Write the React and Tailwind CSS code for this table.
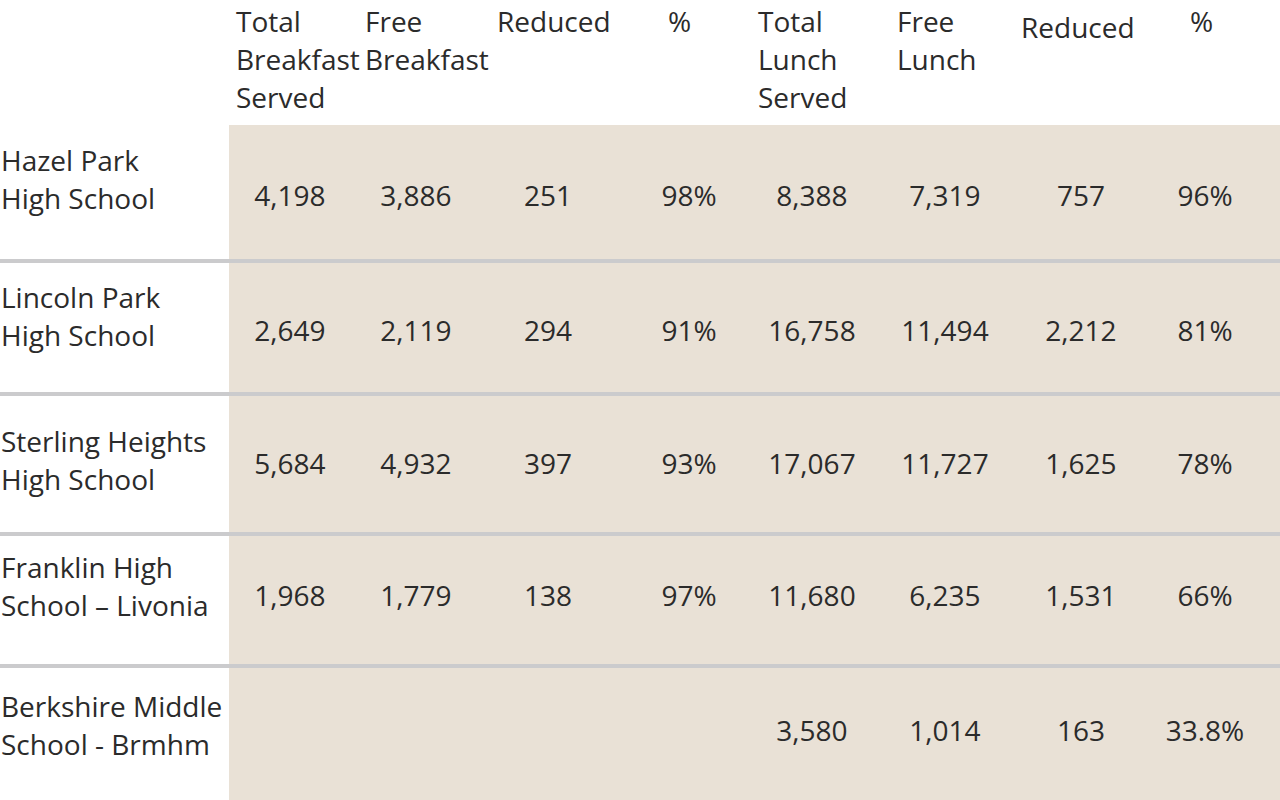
const headers = [
  ["Total", "Breakfast", "Served"],
  ["Free", "Breakfast"],
  ["Reduced"],
  ["%"],
  ["Total", "Lunch", "Served"],
  ["Free", "Lunch"],
  ["Reduced"],
  ["%"],
];

const rows = [
  { name: ["Hazel Park", "High School"], h: "h-[134px]", namePad: "pt-[16px]", numPad: "pt-[51px]", vals: ["4,198", "3,886", "251", "98%", "8,388", "7,319", "757", "96%"] },
  { name: ["Lincoln Park", "High School"], h: "h-[129px]", namePad: "pt-[15px]", numPad: "pt-[48px]", vals: ["2,649", "2,119", "294", "91%", "16,758", "11,494", "2,212", "81%"] },
  { name: ["Sterling Heights", "High School"], h: "h-[136px]", namePad: "pt-[26px]", numPad: "pt-[48px]", vals: ["5,684", "4,932", "397", "93%", "17,067", "11,727", "1,625", "78%"] },
  { name: ["Franklin High", "School – Livonia"], h: "h-[128px]", namePad: "pt-[12px]", numPad: "pt-[40px]", vals: ["1,968", "1,779", "138", "97%", "11,680", "6,235", "1,531", "66%"] },
  { name: ["Berkshire Middle", "School - Brmhm"], h: "h-[132px]", namePad: "pt-[19px]", numPad: "pt-[43px]", vals: ["", "", "", "", "3,580", "1,014", "163", "33.8%"] },
];

export default function App() {
  return (
    <div
      className="w-[1280px] h-[800px] overflow-hidden bg-white text-[#2b2b2b] text-[28px] leading-[38px]"
      style={{ fontFamily: '"Open Sans", "Noto Sans", sans-serif' }}
    >
      <div className="h-[125px] grid grid-cols-[236px_129px_132px_171px_90px_139px_124px_169px_90px]">
        <div />
        {headers.map((lines, i) => (
          <div key={i} className={i === 6 ? "pt-[8px]" : "pt-[2px]"}>
            {lines.map((l) => (
              <div key={l} className="whitespace-nowrap">{l}</div>
            ))}
          </div>
        ))}
      </div>

      {rows.map((r, ri) => (
        <div key={ri}>
          {ri > 0 && <div className="h-[4px] bg-[#cbcbcd]" />}
          <div className={`flex ${r.h}`}>
            <div className={`w-[229px] shrink-0 bg-white pl-[1px] ${r.namePad}`}>
              {r.name.map((l) => (
                <div key={l} className="whitespace-nowrap">{l}</div>
              ))}
            </div>
            <div className={`flex-1 bg-[#e9e1d6] grid grid-cols-[122px_130px_134px_148px_98px_168px_104px_144px] ${r.numPad}`}>
              {r.vals.map((v, i) => (
                <div key={i} className="text-center whitespace-nowrap">{v}</div>
              ))}
            </div>
          </div>
        </div>
      ))}
    </div>
  );
}
